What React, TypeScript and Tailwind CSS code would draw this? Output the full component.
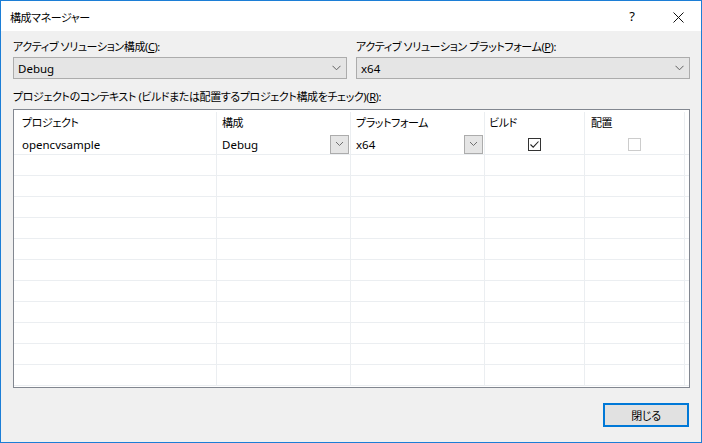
import React from "react";

const FONT = "[font-family:'Noto_Sans','Noto_Sans_CJK_JP',sans-serif] [font-feature-settings:'palt']";
const JP = "tracking-[-0.4px]";

function Chevron() {
  return (
    <svg width="9" height="6" viewBox="0 0 9 6" className="block">
      <path d="M0.5 0.8 L4.5 4.8 L8.5 0.8" fill="none" stroke="#606060" strokeWidth="1" />
    </svg>
  );
}

function Combo({ value }: { value: string }) {
  return (
    <div className="flex h-[22px] w-[334px] items-center justify-between border border-[#acacac] bg-[#e5e5e5] pl-[4px] pr-[5px]">
      <span className="pt-[2px] text-[11.5px] leading-none text-black">{value}</span>
      <Chevron />
    </div>
  );
}

function CellDrop() {
  return (
    <div className="mr-[1px] flex h-[19px] w-[19px] items-center justify-center border border-[#acacac] bg-[#e5e5e5]">
      <svg width="9" height="6" viewBox="0 0 9 6" className="block">
        <path d="M1 1 L4.5 4.5 L8 1" fill="none" stroke="#707070" strokeWidth="1" />
      </svg>
    </div>
  );
}

const widths = ["w-[203px]", "w-[134px]", "w-[134px]", "w-[100px]", "w-[100px]"];

function EmptyRow() {
  return (
    <div className="flex h-[21px] shrink-0 border-b border-[#ebeef1]">
      {widths.map((w, i) => (
        <div key={i} className={`${w} h-full border-r border-[#ebeef1]`} />
      ))}
    </div>
  );
}

export default function App() {
  return (
    <div className={`${FONT} flex h-[443px] w-[702px] flex-col border border-[#1c7ed6] bg-[#f0f0f0] text-black`}>
      {/* Title bar */}
      <div className="flex h-[30px] shrink-0 items-center bg-white">
        <span className={`pl-[9px] pt-[2px] text-[11px] leading-none ${JP}`}>構成マネージャー</span>
        <div className="ml-auto flex h-full">
          <div className="flex h-full w-[46px] items-center justify-center pt-[2px] text-[13px]">?</div>
          <div className="flex h-full w-[46px] items-center justify-center pt-[2px]">
            <svg width="11" height="11" viewBox="0 0 11 11">
              <path d="M0.5 0.5 L10.5 10.5 M10.5 0.5 L0.5 10.5" stroke="#111" strokeWidth="1" fill="none" />
            </svg>
          </div>
        </div>
      </div>

      {/* Body */}
      <div className="flex flex-1 flex-col pl-[12px] pr-[11px]">
        <div className="mt-[7px] flex gap-[9px]">
          <div className="flex w-[334px] flex-col gap-[3px]">
            <div className={`h-[16px] pt-[1px] text-[11px] leading-[16px] ${JP}`}>
              アクティブ ソリューション構成(<span className="underline">C</span>):
            </div>
            <Combo value="Debug" />
          </div>
          <div className="flex w-[334px] flex-col gap-[3px]">
            <div className={`h-[16px] pt-[1px] text-[11px] leading-[16px] ${JP}`}>
              アクティブ ソリューション プラットフォーム(<span className="underline">P</span>):
            </div>
            <Combo value="x64" />
          </div>
        </div>

        <div className={`mt-[9px] h-[16px] pt-[1px] text-[11px] leading-[16px] ${JP}`}>
          プロジェクトのコンテキスト (ビルドまたは配置するプロジェクト構成をチェック)(<span className="underline">R</span>):
        </div>

        {/* Grid */}
        <div className="mt-[5px] flex h-[279px] flex-col overflow-hidden border border-[#828790] bg-white">
          <div className={`flex h-[24px] shrink-0 pt-[2px] text-[11px] ${JP}`}>
            <div className="flex w-[203px] items-center border-r border-[#ebeef1] pl-[8px]">プロジェクト</div>
            <div className="flex w-[134px] items-center border-r border-[#ebeef1] pl-[5px]">構成</div>
            <div className="flex w-[134px] items-center border-r border-[#ebeef1] pl-[5px]">プラットフォーム</div>
            <div className="flex w-[100px] items-center border-r border-[#ebeef1] pl-[4px]">ビルド</div>
            <div className="flex w-[100px] items-center border-r border-[#ebeef1] pl-[6px]">配置</div>
          </div>
          <div className="flex h-[21px] shrink-0 border-b border-[#ebeef1] text-[11.5px]">
            <div className="flex w-[203px] items-center border-r border-[#ebeef1] pl-[8px] pt-[2px]">opencvsample</div>
            <div className="flex w-[134px] items-center justify-between border-r border-[#ebeef1] pl-[5px]">
              <span className="pt-[2px]">Debug</span>
              <CellDrop />
            </div>
            <div className="flex w-[134px] items-center justify-between border-r border-[#ebeef1] pl-[5px]">
              <span className="pt-[2px]">x64</span>
              <CellDrop />
            </div>
            <div className="flex w-[100px] items-center justify-center border-r border-[#ebeef1]">
              <div className="flex h-[13px] w-[13px] items-center justify-center border border-[#333333] bg-white">
                <svg width="11" height="11" viewBox="0 0 11 11">
                  <path d="M1.5 5.5 L4.2 8.2 L9.5 2.5" fill="none" stroke="#222" strokeWidth="1.1" />
                </svg>
              </div>
            </div>
            <div className="flex w-[100px] items-center justify-center border-r border-[#ebeef1]">
              <div className="h-[13px] w-[13px] border border-[#cccccc] bg-white" />
            </div>
          </div>
          {Array.from({ length: 11 }).map((_, i) => (
            <EmptyRow key={i} />
          ))}
        </div>

        <div className="mt-[15px] flex justify-end pr-[1px]">
          <div className={`flex h-[24px] w-[86px] items-center justify-center border-2 border-[#0078d7] bg-[#e1e1e1] pt-[1px] text-[11px] leading-none ${JP}`}>
            閉じる
          </div>
        </div>
      </div>
    </div>
  );
}
